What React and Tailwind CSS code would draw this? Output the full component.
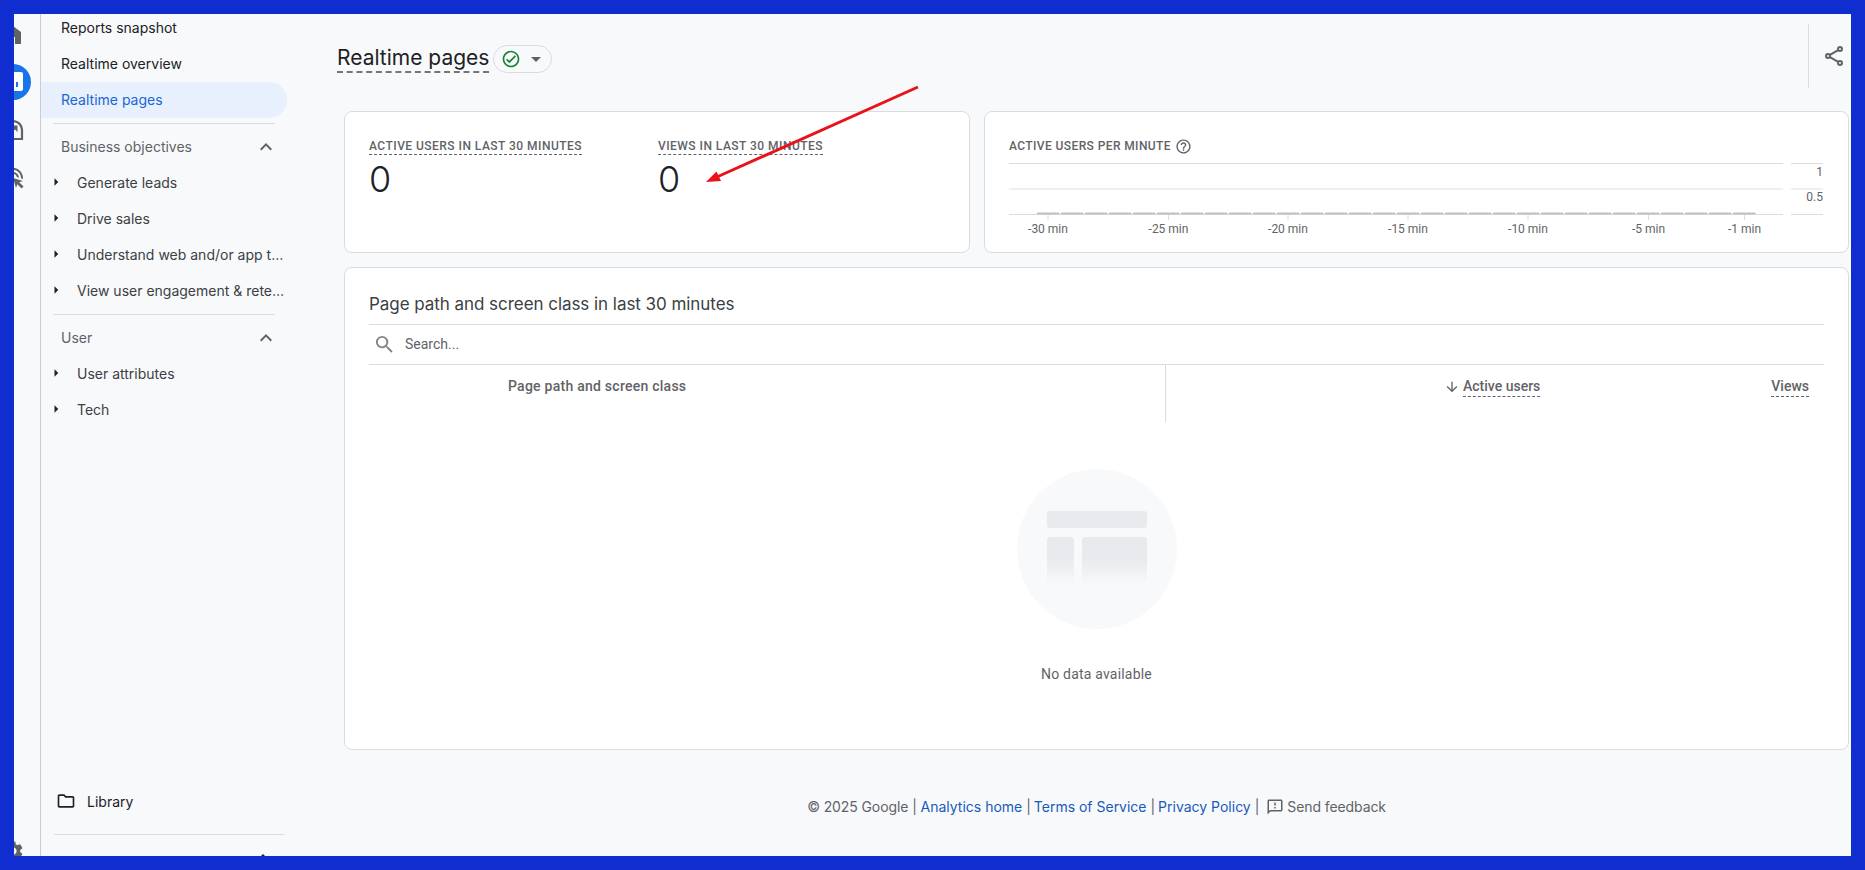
import {
  MdAdsClick,
  MdArrowDownward,
  MdArrowDropDown,
  MdArrowRight,
  MdExpandLess,
  MdHelpOutline,
  MdOutlineCheckCircle,
  MdOutlineFeedback,
  MdOutlineFolder,
  MdSearch,
  MdSettings,
} from 'react-icons/md';

const OBJECTIVES = ['Generate leads', 'Drive sales', 'Understand web and/or app t…', 'View user engagement & rete…'];
const USER_ITEMS = ['User attributes', 'Tech'];
const X_TICKS = [
  { x: 39, label: '-30 min' },
  { x: 159.5, label: '-25 min' },
  { x: 279, label: '-20 min' },
  { x: 399, label: '-15 min' },
  { x: 519, label: '-10 min' },
  { x: 639.5, label: '-5 min' },
  { x: 735.5, label: '-1 min' },
];

function Rail() {
  return (
    <div className="w-[27px] shrink-0 border-r border-[#c9ccd0] overflow-hidden flex flex-col justify-between text-[#5f6368]">
      <div className="flex flex-col -ml-[25px] -mt-[4px] w-[48px]">
        <div className="h-[48px] pt-[2px] flex items-center justify-center">
          <svg viewBox="0 0 24 24" className="w-6 h-6" fill="currentColor">
            <path d="M4 21V9l8-6 8 6v12h-6v-7h-4v7H4z" />
          </svg>
        </div>
        <div className="h-[48px] flex items-center justify-center">
          <div className="w-9 h-9 rounded-full bg-[#1a73e8] flex items-center justify-center">
            <svg viewBox="0 0 24 24" className="w-6 h-6">
              <rect x="3" y="2" width="19" height="19" rx="2" fill="#fff" />
              <rect x="7" y="12" width="2" height="5" fill="#1a73e8" />
              <rect x="11" y="7" width="2" height="10" fill="#1a73e8" />
              <rect x="15" y="12" width="2" height="5" fill="#1a73e8" />
            </svg>
          </div>
        </div>
        <div className="h-[48px] flex items-center justify-center">
          <svg viewBox="0 0 24 24" className="w-6 h-6" fill="none" stroke="currentColor" strokeWidth="2.2">
            <path d="M12 3a9 9 0 1 0 0 18h9v-9a9 9 0 0 0-9-9z" />
            <path d="M7 16l7-6" />
            <path d="M10 7.5h6.5V14z" fill="currentColor" stroke="none" />
          </svg>
        </div>
        <div className="h-[48px] flex items-center justify-center">
          <MdAdsClick size={24} />
        </div>
      </div>
      <div className="-ml-[25px] w-[48px] h-[17px] flex justify-center">
        <MdSettings size={24} className="shrink-0" />
      </div>
    </div>
  );
}

function SectionHead({ label }) {
  return (
    <div className="h-9 flex items-center justify-between pl-[20px] pr-[19px] text-[#5f6368]">
      <span className="mb-[2px]">{label}</span>
      <MdExpandLess size={24} />
    </div>
  );
}

function NavGroup({ items }) {
  return items.map(item => (
    <div key={item} className="h-9 flex items-center pl-[6px] pb-[2px] text-[#3c4043]">
      <MdArrowRight size={18} className="shrink-0 text-[#202124]" />
      <span className="ml-[12px] whitespace-nowrap">{item}</span>
    </div>
  ));
}

function Sidebar() {
  return (
    <div className="w-[256px] shrink-0 flex flex-col justify-between overflow-hidden text-[14px] font-[Inter,sans-serif] text-[#202124]">
      <div className="-mt-[4px]">
        <div className="h-9 flex items-center pl-[20px] pb-[2px]">Reports snapshot</div>
        <div className="h-9 flex items-center pl-[20px] pb-[2px]">Realtime overview</div>
        <div className="h-9 w-[246px] flex items-center pl-[20px] pb-[2px] rounded-r-full bg-[#e8f0fe] text-[#1967d2]">Realtime pages</div>
        <div className="mt-[5px] ml-[12px] w-[222px] border-t border-[#dadce0]" />
        <div className="mt-[5px]">
          <SectionHead label="Business objectives" />
          <NavGroup items={OBJECTIVES} />
        </div>
        <div className="mt-[5px] ml-[12px] w-[222px] border-t border-[#dadce0]" />
        <div className="mt-[5px]">
          <SectionHead label="User" />
          <NavGroup items={USER_ITEMS} />
        </div>
      </div>
      <div>
        <div className="h-9 flex items-center pl-[15px] pb-[2px] gap-[11px]">
          <MdOutlineFolder size={20} />
          <span>Library</span>
        </div>
        <div className="mt-[14px] ml-[13px] w-[230px] border-t border-[#dadce0]" />
        <div className="h-[21px] pt-[11px] pl-[210px] overflow-hidden">
          <MdExpandLess size={24} />
        </div>
      </div>
    </div>
  );
}

function Metric({ label, value }) {
  return (
    <div className="w-[288px]">
      <span className="block w-fit font-[Roboto,sans-serif] font-medium text-[12px] leading-[16px] tracking-[0.47px] uppercase text-[#5f6368] border-b border-dashed border-[#5f6368]">
        {label}
      </span>
      <div className="mt-[2px] text-[36px] leading-[44px] font-[Inter,sans-serif] font-light text-[#202124]">{value}</div>
    </div>
  );
}

function MinuteChart() {
  const bars = Array.from({ length: 30 }, (_, i) => 28 + i * 24);
  return (
    <svg width="816" height="76" className="block mt-[6px]" fontFamily="Roboto, sans-serif" fontSize="12" fill="#5f6368">
      <line x1="0" y1="3.5" x2="774" y2="3.5" stroke="#dadce0" />
      <line x1="0" y1="29" x2="774" y2="29" stroke="#eeeff1" strokeWidth="2" />
      <line x1="0" y1="54.5" x2="774" y2="54.5" stroke="#dadce0" />
      <line x1="782" y1="3.5" x2="814" y2="3.5" stroke="#dadce0" />
      <line x1="782" y1="29" x2="814" y2="29" stroke="#eeeff1" strokeWidth="2" />
      <line x1="782" y1="54.5" x2="814" y2="54.5" stroke="#dadce0" />
      <text x="814" y="15.5" textAnchor="end">1</text>
      <text x="814" y="40.5" textAnchor="end">0.5</text>
      {bars.map(x => (
        <rect key={x} x={x} y="52.5" width="22.5" height="2" fill="#bdc1c6" />
      ))}
      {X_TICKS.map(t => (
        <g key={t.label}>
          <line x1={t.x} y1="55" x2={t.x} y2="60" stroke="#dadce0" />
          <text x={t.x} y="72.5" textAnchor="middle">{t.label}</text>
        </g>
      ))}
    </svg>
  );
}

function EmptyArt() {
  return (
    <svg width="160" height="160" viewBox="0 0 160 160">
      <defs>
        <linearGradient id="fade" x1="0" y1="0" x2="0" y2="1">
          <stop offset="0.45" stopColor="#e8eaed" />
          <stop offset="1" stopColor="#f8f9fa" />
        </linearGradient>
      </defs>
      <circle cx="80" cy="80" r="80" fill="#f8f9fa" />
      <rect x="30" y="42" width="100" height="17" rx="3" fill="#e8eaed" />
      <rect x="30" y="68" width="27" height="48" rx="3" fill="url(#fade)" />
      <rect x="65" y="68" width="65" height="48" rx="3" fill="url(#fade)" />
    </svg>
  );
}

function RedArrow() {
  return (
    <svg className="absolute -left-[14px] -top-[14px] pointer-events-none" width="1865" height="870">
      <line x1="918" y1="87" x2="718" y2="176.5" stroke="#e8121a" strokeWidth="3" />
      <polygon points="706,182 721,181 716.5,171.5" fill="#e8121a" />
    </svg>
  );
}

export default function App() {
  return (
    <div className="relative w-screen h-screen overflow-hidden border-[14px] border-[#102dcf] bg-[#f8f9fb] flex">
      <Rail />
      <Sidebar />
      <div className="flex-1 min-w-0 pl-[40px] flex flex-col">
        {/* Title bar */}
        <div className="h-[97px] shrink-0 flex justify-between items-start">
          <div className="flex items-start pt-[31px]">
            <h1 className="font-[Inter,sans-serif] text-[21px] leading-[25px] pb-[1px] font-normal text-[#202124] border-b-2 border-dashed border-[#757575]">
              Realtime pages
            </h1>
            <div className="ml-[4px] w-[59px] h-[28px] rounded-full border border-[#dadce0] flex items-center pl-[7px] gap-[3px]">
              <MdOutlineCheckCircle size={20} className="text-[#188038]" />
              <MdArrowDropDown size={24} className="text-[#5f6368]" />
            </div>
          </div>
          <div className="mt-[10px] h-[64px] w-[43px] border-l border-[#dadce0] pl-[13px] flex items-center text-[#5f6368]">
            <svg viewBox="0 0 24 24" className="w-6 h-6" fill="none" stroke="currentColor" strokeWidth="2">
              <circle cx="18" cy="5" r="2" />
              <circle cx="6" cy="12" r="2" />
              <circle cx="18" cy="19" r="2" />
              <path d="M8 10.9l8.2-4.8M8 13.1l8.2 4.8" />
            </svg>
          </div>
        </div>

        <div className="ml-[7px] mr-[2px] flex flex-col">
          {/* Metric cards */}
          <div className="flex gap-[14px] h-[142px]">
            <div className="w-[626px] bg-white rounded-lg border border-[#dadce0] pl-[24px] pt-[26px] flex">
              <Metric label="Active users in last 30 minutes" value="0" />
              <div className="ml-px">
                <Metric label="Views in last 30 minutes" value="0" />
              </div>
            </div>
            <div className="flex-1 bg-white rounded-lg border border-[#dadce0] pl-[24px] pt-[26px]">
              <div className="flex items-center gap-[4px] h-[16px] font-[Roboto,sans-serif] font-medium text-[12px] tracking-[0.4px] text-[#5f6368] uppercase">
                <span>Active users per minute</span>
                <MdHelpOutline size={17} />
              </div>
              <MinuteChart />
            </div>
          </div>

          {/* Page table */}
          <div className="mt-[14px] h-[483px] bg-white rounded-lg border border-[#dadce0] px-[24px] flex flex-col font-[Roboto,sans-serif]">
            <div className="pt-[24px] pb-[8px] border-b border-[#dadce0] font-[Inter,sans-serif] text-[17px] leading-[24px] tracking-[-0.05px] text-[#3c4043]">
              Page path and screen class in last 30 minutes
            </div>
            <div className="h-[40px] border-b border-[#dadce0] flex items-center pl-[4px] gap-[9px] text-[14px] text-[#5f6368]">
              <MdSearch size={23} className="text-[#80868b]" />
              <span>Search...</span>
            </div>
            <div className="flex h-[57px] text-[14px] leading-[20px] font-medium text-[#5f6368]">
              <div className="w-[797px] border-r border-[#dadce0] pl-[139px] pt-[11px] tracking-[0.25px]">Page path and screen class</div>
              <div className="flex-1 flex justify-end items-start pt-[11px] pr-[15px]">
                <MdArrowDownward size={16} className="mt-[3px] mr-[3px]" />
                <span className="border-b border-dashed border-[#5f6368]">Active users</span>
                <span className="ml-[231px] border-b border-dashed border-[#5f6368]">Views</span>
              </div>
            </div>
            <div className="flex flex-col items-center mt-[47px]">
              <EmptyArt />
              <p className="mt-[35px] text-[14px] leading-[20px] tracking-[0.2px] text-[#5f6368]">No data available</p>
            </div>
          </div>

          {/* Footer */}
          <div className="mt-[47px] flex justify-center items-center text-[14px] leading-[20px] font-[Inter,sans-serif] text-[#5f6368]">
            <span className="tracking-[-0.1px]">© 2025 Google |&nbsp;</span>
            <a className="text-[#185abc]">Analytics home</a>
            <span className="-mr-px">&nbsp;|&nbsp;</span>
            <a className="text-[#185abc]">Terms of Service</a>
            <span className="-mr-px">&nbsp;|&nbsp;</span>
            <a className="text-[#185abc]">Privacy Policy</a>
            <span>&nbsp;|</span>
            <MdOutlineFeedback size={18} className="ml-[7px] mr-[3px]" />
            <span className="tracking-[-0.1px]">Send feedback</span>
          </div>
        </div>
      </div>
      <RedArrow />
    </div>
  );
}
